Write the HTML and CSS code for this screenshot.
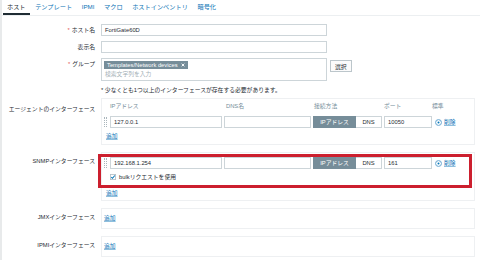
FILE: index.html
```html
<!DOCTYPE html>
<html lang="ja">
<head>
    <meta charset="UTF-8">
    <title>ホスト</title>
    <link rel="stylesheet" href="styles.css">
</head>
<body>
    <div class="page">
        <div class="tabs">
            <span class="tab active">ホスト</span>
            <span class="tab">テンプレート</span>
            <span class="tab">IPMI</span>
            <span class="tab">マクロ</span>
            <span class="tab">ホストインベントリ</span>
            <span class="tab">暗号化</span>
        </div>
        <div class="form">
            <div class="row">
                <div class="label"><span class="req">*</span>ホスト名</div>
                <div class="field"><div class="input wide">FortiGate60D</div></div>
            </div>
            <div class="row">
                <div class="label">表示名</div>
                <div class="field"><div class="input wide"></div></div>
            </div>
            <div class="row">
                <div class="label"><span class="req">*</span>グループ</div>
                <div class="field group">
                    <div class="multi">
                        <span class="tag">Templates/Network devices
                            <svg class="x" viewBox="0 0 6 6"><path d="M1 1L5 5M5 1L1 5" stroke="white" stroke-width="1.4"/></svg>
                        </span>
                        <div class="placeholder">検索文字列を入力</div>
                    </div>
                    <button class="btn">選択</button>
                </div>
            </div>
            <div class="row note-row">
                <div class="label"></div>
                <div class="note">* 少なくとも1つ以上のインターフェースが存在する必要があります。</div>
            </div>

            <div class="row iface-row">
                <div class="label agent-label">エージェントのインターフェース</div>
                <div class="box agent">
                    <div class="grid head">
                        <span></span>
                        <span>IPアドレス</span>
                        <span>DNS名</span>
                        <span>接続方法</span>
                        <span>ポート</span>
                        <span class="std">標準</span>
                    </div>
                    <div class="grid">
                        <span class="handle"></span>
                        <div class="input">127.0.0.1</div>
                        <div class="input"></div>
                        <div class="toggle"><span class="on">IPアドレス</span><span class="off">DNS</span></div>
                        <div class="input">10050</div>
                        <span class="radio"></span>
                        <a class="link">削除</a>
                    </div>
                    <a class="link add">追加</a>
                </div>
            </div>

            <div class="row iface-row">
                <div class="label">SNMPインターフェース</div>
                <div class="box snmp">
                    <div class="grid">
                        <span class="handle"></span>
                        <div class="input">192.168.1.254</div>
                        <div class="input"></div>
                        <div class="toggle"><span class="on">IPアドレス</span><span class="off">DNS</span></div>
                        <div class="input">161</div>
                        <span class="radio"></span>
                        <a class="link">削除</a>
                    </div>
                    <div class="bulk">
                        <svg class="check" viewBox="0 0 7 7"><rect x="0.5" y="0.5" width="6" height="6" fill="white" stroke="#b5c1c7"/><path d="M1.5 3.6L2.9 5L5.6 1.8" fill="none" stroke="#0275b8" stroke-width="1.2"/></svg>
                        bulkリクエストを使用
                    </div>
                    <a class="link add">追加</a>
                    <div class="highlight"></div>
                </div>
            </div>

            <div class="row iface-row">
                <div class="label">JMXインターフェース</div>
                <div class="box empty"><a class="link">追加</a></div>
            </div>

            <div class="row iface-row">
                <div class="label">IPMIインターフェース</div>
                <div class="box empty"><a class="link">追加</a></div>
            </div>
        </div>
    </div>
</body>
</html>
```

FILE: styles.css
```css
body {
    margin: 0;
    background-color: white;
    font-family: "Liberation Sans", "Noto Sans CJK JP", sans-serif;
    font-size: 5.8px;
    color: #1f2c33;
}
.page {
    height: 260px;
    border-left: 2px solid #e8eaeb;
    overflow: hidden;
}
.tabs {
    display: flex;
    height: 16px;
    padding-left: 1px;
    border-bottom: 1px solid #eceff1;
    box-sizing: border-box;
    font-size: 6.2px;
}
.tab {
    padding: 0 4px;
    margin-right: 1.6px;
    line-height: 14px;
    color: #0b73b5;
}
.tab.active {
    color: #1f2c33;
    border-bottom: 2px solid #1f2c33;
}
.form {
    padding-top: 8px;
}
.row {
    display: grid;
    grid-template-columns: 93px 1fr;
    column-gap: 6px;
    margin-bottom: 5px;
}
.label {
    text-align: right;
    line-height: 12px;
}
.req {
    color: #e45959;
    margin-right: 2px;
}
.input {
    height: 12px;
    box-sizing: border-box;
    border: 1px solid #cdd5d9;
    padding: 0 3px;
    line-height: 10px;
    background: white;
    white-space: nowrap;
}
.input.wide {
    width: 226px;
}
.group {
    display: flex;
    align-items: flex-start;
}
.multi {
    width: 226px;
    height: 23px;
    box-sizing: border-box;
    border: 1px solid #cdd5d9;
    padding: 2px;
}
.tag {
    display: inline-flex;
    align-items: center;
    gap: 3px;
    background-color: #768d99;
    color: white;
    padding: 0 3px;
    line-height: 8px;
}
.x {
    width: 4px;
    height: 4px;
}
.placeholder {
    color: #a3b0b6;
    line-height: 9px;
    margin-top: 1px;
    padding-left: 1px;
}
.btn {
    margin: 2px 0 0 3px;
    height: 12px;
    padding: 0 4px;
    border: 1px solid #bcc6cb;
    background: #fbfbfb;
    font-family: inherit;
    font-size: 5.8px;
    color: #1f2c33;
}
.note-row {
    margin-bottom: 4px;
}
.note-row .label {
    line-height: 8px;
}
.note {
    line-height: 8px;
}
.iface-row {
    margin-bottom: 7px;
}
.iface-row .label {
    line-height: 8px;
    padding-top: 5px;
}
.iface-row .agent-label {
    padding-top: 7px;
}
.box {
    width: 374px;
    box-sizing: border-box;
    border: 1px solid #eef0f2;
    padding: 3px 2px 4px 2px;
    position: relative;
}
.grid {
    display: grid;
    grid-template-columns: 4px 112px 87px 69px 48px 8px auto;
    column-gap: 2px;
    align-items: center;
}
.head {
    line-height: 8px;
    color: #768d99;
    margin-bottom: 6px;
}
.head span:nth-child(3) {
    padding-left: 2px;
}
.head span:nth-child(4) {
    padding-left: 1px;
}
.head .std {
    grid-column: span 2;
    margin-left: -2px;
}
.handle {
    height: 10px;
    width: 1px;
    border-left: 1px dotted #aab6bc;
    border-right: 1px dotted #aab6bc;
}
.toggle {
    display: flex;
    height: 12px;
    line-height: 12px;
}
.toggle .on {
    width: 43px;
    background-color: #768d99;
    color: white;
    text-align: center;
}
.toggle .off {
    flex: 1;
    box-sizing: border-box;
    border: 1px solid #cdd5d9;
    border-left: none;
    line-height: 10px;
    text-align: center;
    color: #1f2c33;
}
.radio {
    width: 7px;
    height: 7px;
    box-sizing: border-box;
    border-radius: 50%;
    border: 1px solid #9cc4e0;
    background-color: #0275b8;
    box-shadow: inset 0 0 0 1.5px white;
    margin-left: 1px;
}
.link {
    color: #0b73b5;
    text-decoration: underline;
    text-decoration-color: #8fbfdd;
    line-height: 8px;
}
.add {
    display: inline-block;
    margin-top: 4px;
    margin-left: 2px;
}
.snmp {
    padding-top: 4px;
    padding-bottom: 3px;
}
.bulk {
    display: flex;
    align-items: center;
    gap: 3px;
    margin: 4px 0 0 6px;
    line-height: 8px;
}
.check {
    width: 6px;
    height: 6px;
}
.snmp .add {
    margin-top: 8px;
}
.highlight {
    position: absolute;
    left: -4px;
    top: 1px;
    width: 374px;
    height: 34px;
    box-sizing: border-box;
    border: 3px solid #cc1f2e;
}
.empty {
    height: 21px;
    padding: 5px 2px 0 2px;
}
```
